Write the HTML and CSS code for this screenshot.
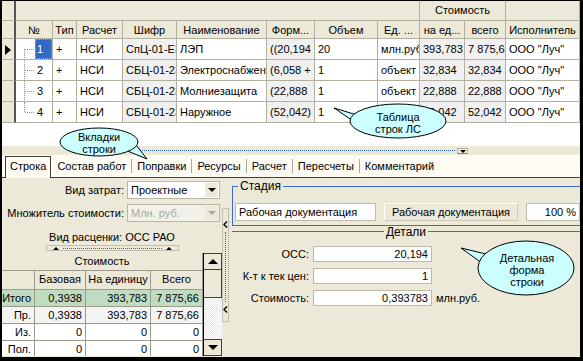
FILE: index.html
```html
<!DOCTYPE html>
<html lang="ru">
<head>
    <meta charset="UTF-8">
    <title>Строки ЛС</title>
    <link rel="stylesheet" href="styles.css">
</head>
<body>
<div class="window">

  <!-- таблица строк -->
  <div class="rows-area">
    <div class="grid">
      <div class="hd ind"></div>
      <div class="hd span-main"></div>
      <div class="hd span-cost">Стоимость</div>
      <div class="hd"></div>

      <div class="hd ind"></div>
      <div class="hd">№</div>
      <div class="hd">Тип</div>
      <div class="hd">Расчет</div>
      <div class="hd">Шифр</div>
      <div class="hd">Наименование</div>
      <div class="hd">Форм...</div>
      <div class="hd">Объем</div>
      <div class="hd">Ед. ...</div>
      <div class="hd">на ед...</div>
      <div class="hd">всего</div>
      <div class="hd">Исполнитель</div>

      <div class="ind current"><span class="pointer"></span></div>
      <div class="num first"><span class="n selected">1</span></div>
      <div class="c">+</div>
      <div class="c">НСИ</div>
      <div class="c ro">СпЦ-01-E3</div>
      <div class="c">ЛЭП</div>
      <div class="c ro">((20,194</div>
      <div class="c">20</div>
      <div class="c">млн.руб.</div>
      <div class="c ro">393,783</div>
      <div class="c ro">7 875,66</div>
      <div class="c">ООО "Луч"</div>

      <div class="ind"></div>
      <div class="num"><span class="n">2</span></div>
      <div class="c">+</div>
      <div class="c">НСИ</div>
      <div class="c ro">СБЦ-01-23</div>
      <div class="c">Электроснабжение</div>
      <div class="c ro">(6,058 + </div>
      <div class="c">1</div>
      <div class="c">объект</div>
      <div class="c ro">32,834</div>
      <div class="c ro">32,834</div>
      <div class="c">ООО "Луч"</div>

      <div class="ind"></div>
      <div class="num"><span class="n">3</span></div>
      <div class="c">+</div>
      <div class="c">НСИ</div>
      <div class="c ro">СБЦ-01-23</div>
      <div class="c">Молниезащита</div>
      <div class="c ro">(22,888</div>
      <div class="c">1</div>
      <div class="c">объект</div>
      <div class="c ro">22,888</div>
      <div class="c ro">22,888</div>
      <div class="c">ООО "Луч"</div>

      <div class="ind"></div>
      <div class="num last"><span class="n">4</span></div>
      <div class="c">+</div>
      <div class="c">НСИ</div>
      <div class="c ro">СБЦ-01-23</div>
      <div class="c">Наружное</div>
      <div class="c ro">(52,042)</div>
      <div class="c">1</div>
      <div class="c">объект</div>
      <div class="c ro">52,042</div>
      <div class="c ro">52,042</div>
      <div class="c">ООО "Луч"</div>
    </div>
  </div>

  <div class="hsplit">
    <span class="hsplit-btn"><span class="dots"></span><span class="arr-down"></span></span>
  </div>

  <!-- вкладки -->
  <div class="tabs">
    <span class="tab active">Строка</span>
    <span class="tab">Состав работ</span>
    <span class="tab">Поправки</span>
    <span class="tab">Ресурсы</span>
    <span class="tab">Расчет</span>
    <span class="tab">Пересчеты</span>
    <span class="tab">Комментарий</span>
  </div>

  <div class="page">
    <div class="left">
      <div class="field">
        <label>Вид затрат:</label>
        <div class="combo"><span class="val">Проектные</span><span class="drop"><i></i></span></div>
      </div>
      <div class="field">
        <label>Множитель стоимости:</label>
        <div class="combo disabled"><span class="val">Млн. руб.</span><span class="drop"><i></i></span></div>
      </div>
      <div class="price-kind">Вид расценки: ОСС РАО</div>
      <div class="mini-split"><span class="arr-up"></span><span class="dots"></span><span class="arr-up"></span></div>

      <div class="cost">
        <div class="cost-grid">
          <div class="ch wide">Стоимость</div>
          <div class="ch"></div>
          <div class="ch">Базовая</div>
          <div class="ch">На единицу</div>
          <div class="ch">Всего</div>

          <div class="cr total">Итого</div>
          <div class="cr total">0,3938</div>
          <div class="cr total">393,783</div>
          <div class="cr total">7 875,66</div>

          <div class="cr">Пр.</div>
          <div class="cr">0,3938</div>
          <div class="cr">393,783</div>
          <div class="cr">7 875,66</div>

          <div class="cr white">Из.</div>
          <div class="cr white">0</div>
          <div class="cr white">0</div>
          <div class="cr white">0</div>

          <div class="cr white">Пол.</div>
          <div class="cr white">0</div>
          <div class="cr white">0</div>
          <div class="cr white">0</div>
        </div>
        <div class="vscroll">
          <span class="sb-btn"><i class="up"></i></span>
          <span class="sb-thumb"></span>
          <span class="sb-track"></span>
          <span class="sb-btn"><i class="down"></i></span>
        </div>
      </div>
    </div>

    <div class="vsplit">
      <div class="vsplit-btn">
        <svg class="lt" width="5" height="7" viewBox="0 0 5 7"><polyline points="4,0.5 1,3.5 4,6.5" fill="none" stroke="#000" stroke-width="1.4"/></svg>
        <span class="vdots"></span>
        <svg class="lt" width="5" height="7" viewBox="0 0 5 7"><polyline points="4,0.5 1,3.5 4,6.5" fill="none" stroke="#000" stroke-width="1.4"/></svg>
      </div>
    </div>

    <div class="right">
      <div class="group stage">
        <span class="legend">Стадия</span>
        <div class="stage-row">
          <div class="edit wide">Рабочая документация</div>
          <div class="plate">Рабочая документация</div>
          <div class="edit pct">100 %</div>
        </div>
      </div>

      <div class="details-title"><span>Детали</span></div>
      <div class="details">
        <div class="drow"><label>ОСС:</label><div class="edit num-edit">20,194</div></div>
        <div class="drow"><label>К-т к тек цен:</label><div class="edit num-edit">1</div></div>
        <div class="drow"><label>Стоимость:</label><div class="edit num-edit">0,393783</div><span class="unit">млн.руб.</span></div>
      </div>
    </div>
  </div>

  <!-- выноски -->
  <svg class="callouts" width="578" height="356" viewBox="2 1 578 356">
    <g fill="#ccffff" stroke="#000" stroke-width="1">
      <path d="M 357 115 L 334 108 L 362 127 Z"/>
      <ellipse cx="398" cy="121" rx="48" ry="17"/>
      <path d="M 125 150 L 147 159 L 133 141 Z"/>
      <ellipse cx="99" cy="142" rx="39" ry="14"/>
      <path d="M 490 255 L 461 248 L 486 266 Z"/>
      <ellipse cx="526" cy="268" rx="48" ry="27"/>
    </g>
    <g stroke="#ccffff" stroke-width="2">
      <line x1="355" y1="116" x2="359" y2="124"/>
      <line x1="127" y1="149" x2="132" y2="144"/>
      <line x1="488" y1="256" x2="487" y2="264"/>
    </g>
    <g font-family="Liberation Sans, Arial, sans-serif" font-size="11" text-anchor="middle" fill="#000">
      <text x="398" y="121">Таблица</text>
      <text x="398" y="133">строк ЛС</text>
      <text x="99" y="141">Вкладки</text>
      <text x="99" y="153">строки</text>
      <text x="527" y="262">Детальная</text>
      <text x="527" y="274">форма</text>
      <text x="527" y="286">строки</text>
    </g>
  </svg>
</div>
</body>
</html>
```

FILE: styles.css
```css
body {
    margin: 0;
    background: #000;
    font-family: "Liberation Sans", Arial, sans-serif;
    font-size: 11px;
    color: #000;
}

.window {
    position: relative;
    width: 578px;
    height: 356px;
    border-style: solid;
    border-color: #000;
    border-width: 1px 3px 4px 2px;
    background: #ece9d8;
    overflow: hidden;
}

/* ---- таблица строк ---- */
.rows-area {
    height: 145px;
    background: #fff;
}

.grid {
    display: grid;
    grid-template-columns: 14px 37px 24px 46px 54px 90px 48px 63px 42px 45px 41px 74px;
    grid-template-rows: 20px 18px 21px 21px 21px 21px;
}

.grid > div {
    box-sizing: border-box;
    border-right: 1px solid #b4b09f;
    border-bottom: 1px solid #b4b09f;
    white-space: nowrap;
    overflow: hidden;
}

.hd {
    background: #ece9d8;
    text-align: center;
    line-height: 18px;
}

.grid > .ind {
    background: #ece9d8;
    border-right: 2px solid #555;
    position: relative;
}

.span-main {
    grid-column: span 8;
}

.span-cost {
    grid-column: span 2;
}

.c {
    padding-left: 3px;
    line-height: 20px;
    background: #fff;
}

.c.ro {
    background: #f0f0f0;
}

.pointer {
    position: absolute;
    left: 3px;
    top: 6px;
    border-left: 6px solid #000;
    border-top: 5px solid transparent;
    border-bottom: 5px solid transparent;
}

.num {
    position: relative;
    background: #fff;
}

.num::before {
    content: "";
    position: absolute;
    left: 8px;
    top: 0;
    bottom: -1px;
    border-left: 1px dotted #909090;
}

.num.first::before {
    top: 10px;
}

.num.last::before {
    bottom: 10px;
}

.num::after {
    content: "";
    position: absolute;
    left: 9px;
    width: 9px;
    top: 10px;
    border-top: 1px dotted #909090;
}

.n {
    display: inline-block;
    box-sizing: border-box;
    margin: 0 0 0 19px;
    width: 17px;
    height: 20px;
    line-height: 20px;
    padding-left: 2px;
}

.n.selected {
    background: #316ac5;
    color: #fff;
    outline: 1px dotted #e0a040;
    outline-offset: -1px;
}

/* ---- горизонтальный сплиттер ---- */
.hsplit {
    height: 9px;
    display: flex;
    align-items: center;
    justify-content: flex-end;
    padding-right: 112px;
}

.hsplit-btn {
    display: flex;
    align-items: center;
    width: 345px;
    height: 7px;
}

.hsplit .dots {
    flex: 1;
    border-top: 1px dotted #3060d0;
    margin-right: 2px;
}

.arr-down {
    width: 11px;
    height: 6px;
    box-sizing: border-box;
    border: 1px solid #b8b4a4;
    border-bottom-color: #8c8a80;
    position: relative;
}

.arr-down::after {
    content: "";
    position: absolute;
    left: 2px;
    top: 1px;
    border-top: 3px solid #000;
    border-left: 3px solid transparent;
    border-right: 3px solid transparent;
}

/* ---- вкладки ---- */
.tabs {
    height: 22px;
    background: #fdfbf2;
    border-bottom: 1px solid #404040;
    display: flex;
    align-items: flex-end;
    padding-left: 3px;
}

.tab {
    line-height: 14px;
    padding: 0 5px;
    margin-bottom: 4px;
    border-left: 1px solid #a8a59a;
}

.tab.active {
    border: 1px solid #404040;
    border-bottom: none;
    background: #fdfbf2;
    line-height: 18px;
    padding: 0 4px 3px;
    margin-bottom: -1px;
}

.tab.active + .tab {
    border-left: none;
    padding-left: 6px;
}

/* ---- нижняя часть ---- */
.page {
    display: flex;
    height: 179px;
}

.left {
    width: 220px;
    padding-top: 3px;
}

.field {
    display: flex;
    align-items: center;
    height: 18px;
    margin-bottom: 5px;
}

.field label {
    width: 122px;
    text-align: right;
    padding-right: 3px;
}

.combo {
    box-sizing: border-box;
    width: 93px;
    height: 18px;
    background: #fff;
    border: 1px solid #b9b6a6;
    display: flex;
    align-items: center;
}

.combo .val {
    flex: 1;
    padding-left: 3px;
}

.combo .drop {
    width: 13px;
    height: 14px;
    margin-right: 1px;
    background: #ece9d8;
    display: flex;
    align-items: center;
    justify-content: center;
}

.combo .drop i {
    border-top: 4px solid #000;
    border-left: 4px solid transparent;
    border-right: 4px solid transparent;
}

.combo.disabled {
    background: #f2f0e8;
    color: #aca899;
}

.combo.disabled .drop i {
    border-top-color: #aca899;
}

.price-kind {
    text-align: center;
    margin-top: 8px;
    line-height: 14px;
}

.mini-split {
    margin: 1px 0 0 44px;
    width: 133px;
    height: 6px;
    box-sizing: border-box;
    border: 1px solid #c4c0b0;
    display: flex;
    align-items: center;
    padding: 0 6px;
}

.mini-split .dots {
    flex: 1;
    border-top: 1px dotted #3060d0;
    margin: 0 4px;
}

.arr-up {
    border-bottom: 3px solid #000;
    border-left: 3px solid transparent;
    border-right: 3px solid transparent;
}

.cost {
    margin-top: 2px;
    display: flex;
    height: 103px;
    overflow: hidden;
}

.cost-grid {
    display: grid;
    grid-template-columns: 33px 51px 65px 52px;
    grid-template-rows: 18px 19px 17px 17px 17px 17px;
    width: 201px;
}

.cost-grid > div {
    box-sizing: border-box;
    border-right: 1px solid #9d9a8c;
    border-bottom: 1px solid #9d9a8c;
    white-space: nowrap;
    overflow: hidden;
}

.ch {
    background: #ece9d8;
    text-align: center;
    line-height: 17px;
}

.ch.wide {
    grid-column: span 4;
}

.cr {
    text-align: right;
    padding-right: 3px;
    line-height: 16px;
    background: #f4f4f4;
}

.cr.total {
    background: #c0dcc0;
}

.cr.white {
    background: #fff;
}

.vscroll {
    width: 18px;
    border-left: 1px solid #000;
    display: flex;
    flex-direction: column;
}

.sb-btn {
    height: 17px;
    box-sizing: border-box;
    border: 1px solid #404040;
    border-left: none;
    background: #ece9d8;
    display: flex;
    align-items: center;
    justify-content: center;
}

.sb-btn .up {
    border-bottom: 5px solid #000;
    border-left: 5px solid transparent;
    border-right: 5px solid transparent;
}

.sb-btn .down {
    border-top: 5px solid #000;
    border-left: 5px solid transparent;
    border-right: 5px solid transparent;
}

.sb-thumb {
    height: 28px;
    box-sizing: border-box;
    border-right: 1px solid #404040;
    border-bottom: 1px solid #404040;
    background: #ece9d8;
}

.sb-track {
    flex: 1;
    background-color: #fff;
    background-image: repeating-conic-gradient(#ece9d8 0 25%, #fff 0 50%);
    background-size: 2px 2px;
}

.vsplit {
    width: 8px;
    padding-top: 30px;
}

.vsplit-btn {
    box-sizing: border-box;
    width: 7px;
    height: 114px;
    border: 1px solid #c4c0b0;
    display: flex;
    flex-direction: column;
    align-items: center;
    padding: 12px 0 8px;
}

.vsplit-btn .lt {
    display: block;
    flex: none;
}

.vdots {
    flex: 1;
    border-left: 1px dotted #3060d0;
    margin: 4px 0;
}

.right {
    flex: 1;
    padding-left: 2px;
}

.group.stage {
    margin-top: 8px;
    height: 40px;
    box-sizing: border-box;
    border: 1px solid #3c6ad0;
    border-right: none;
    position: relative;
}

.legend {
    display: inline-block;
    background: #ece9d8;
    margin: -7px 0 0 5px;
    padding: 0 2px;
    line-height: 12px;
    vertical-align: top;
    font-size: 12px;
}

.stage-row {
    display: flex;
    align-items: center;
    margin-top: 4px;
    padding-left: 2px;
}

.edit {
    box-sizing: border-box;
    background: #fff;
    border: 1px solid #bdbaa9;
    height: 18px;
    line-height: 16px;
    padding: 0 3px;
    white-space: nowrap;
    overflow: hidden;
}

.edit.wide {
    width: 141px;
}

.plate {
    box-sizing: border-box;
    margin-left: 8px;
    width: 134px;
    height: 18px;
    line-height: 16px;
    text-align: center;
    border: 1px solid #cdc9b9;
    border-top-color: #fff;
    border-left-color: #fff;
}

.edit.pct {
    margin-left: 8px;
    flex: 1;
    text-align: right;
}

.details-title {
    margin-top: 5px;
    height: 1px;
    background: #3c6ad0;
    display: flex;
    justify-content: center;
    align-items: center;
}

.details-title span {
    background: #ece9d8;
    padding: 0 2px;
    line-height: 12px;
    font-size: 12px;
}

.details {
    height: 74px;
    overflow: hidden;
    padding-top: 14px;
    box-sizing: border-box;
}

.drow {
    display: flex;
    align-items: center;
    height: 16px;
    margin-bottom: 6px;
}

.drow label {
    width: 77px;
    text-align: right;
    padding-right: 4px;
}

.edit.num-edit {
    width: 119px;
    height: 16px;
    line-height: 14px;
    text-align: right;
}

.unit {
    margin-left: 4px;
}

/* ---- выноски ---- */
.callouts {
    position: absolute;
    left: 0;
    top: 0;
}
```
